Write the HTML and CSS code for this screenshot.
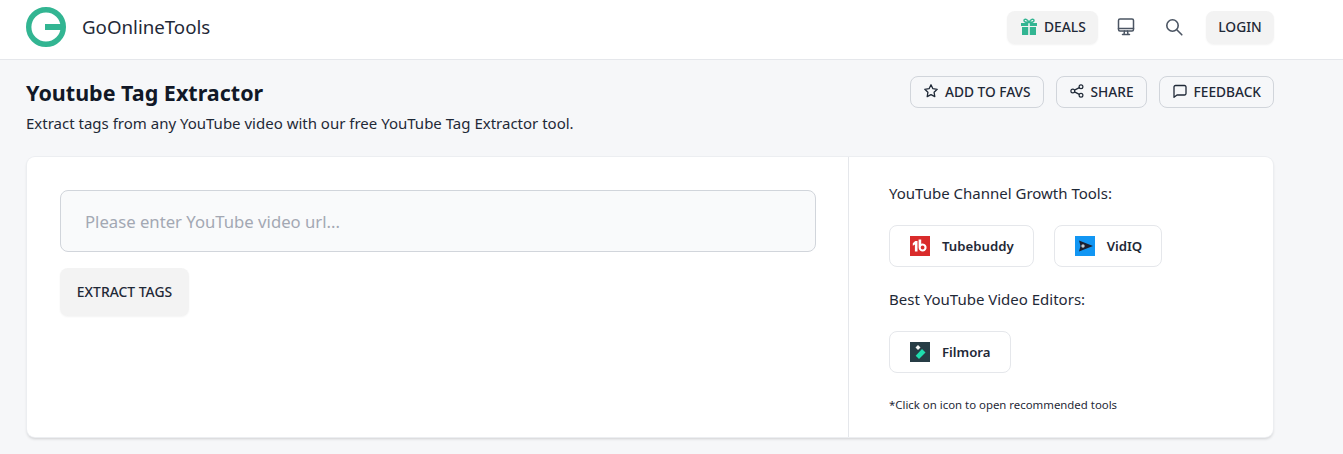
FILE: index.html
```html
<!DOCTYPE html>
<html lang="en">
<head>
  <meta charset="UTF-8" /><meta name="viewport" content="width=device-width, initial-scale=1.0"/>
  <title>Youtube Tag Extractor</title>
  <link rel="stylesheet" href="styles.css">
</head>
<body>
  <header class="topbar">
    <div class="topbar-inner">
      <a class="brand" href="#">
        <svg class="brand-logo" viewBox="0 0 40 40" width="40" height="40">
          <circle cx="20" cy="20" r="17.3" fill="none" stroke="#32b592" stroke-width="5.4"/>
          <rect x="19" y="17" width="19" height="6" fill="#32b592"/>
        </svg>
        <span>GoOnlineTools</span>
      </a>
      <nav class="topnav">
        <button class="pill deals">
          <svg viewBox="0 0 18 18" width="18" height="18" fill="#32b592">
            <path d="M1 5h7.200v3H1zM9.800 5H17v3H9.800zM2 9h6.200v8H2zM9.800 9H16v8H9.800z"/>
            <path d="M9 4.500C7.500 1 4.500 .5 4 2.200 3.600 3.800 6 4.500 9 4.500zM9 4.500c1.500-3.500 4.500-4 5-2.300.4 1.600-2 2.300-5 2.300z" fill="none" stroke="#32b592" stroke-width="1.500"/>
          </svg>
          DEALS
        </button>
        <button class="icon-btn">
          <svg viewBox="0 0 18 18" width="18" height="18" fill="none" stroke="#4b5563" stroke-width="1.500" stroke-linecap="round" stroke-linejoin="round">
            <rect x="1.500" y="1" width="15" height="12" rx="1.500"/>
            <path d="M1.500 10.500h15M7.500 13l-.5 3.500M10.500 13l.5 3.500M5.500 16.500h7"/>
          </svg>
        </button>
        <button class="icon-btn">
          <svg viewBox="0 0 18 18" width="18" height="18" fill="none" stroke="#4b5563" stroke-width="1.600" stroke-linecap="round">
            <circle cx="7.500" cy="7.500" r="5.700"/>
            <path d="M11.800 11.800l5 5"/>
          </svg>
        </button>
        <button class="pill login">LOGIN</button>
      </nav>
    </div>
  </header>

  <main class="page">
    <div class="title-row">
      <div>
        <h1>Youtube Tag Extractor</h1>
        <p class="subtitle">Extract tags from any YouTube video with our free YouTube Tag Extractor tool.</p>
      </div>
      <div class="actions">
        <button class="outline">
          <svg viewBox="0 0 16 16" width="16" height="16" fill="none" stroke="#1f2937" stroke-width="1.300" stroke-linejoin="round">
            <path d="M8 1.800l1.900 3.900 4.300.6-3.100 3 .7 4.300L8 11.600l-3.800 2 .7-4.300-3.100-3 4.300-.6z"/>
          </svg>
          ADD TO FAVS
        </button>
        <button class="outline">
          <svg viewBox="0 0 16 16" width="16" height="16" fill="none" stroke="#1f2937" stroke-width="1.200">
            <circle cx="3.800" cy="8" r="1.900"/>
            <circle cx="12" cy="3.800" r="1.900"/>
            <circle cx="12" cy="12.200" r="1.900"/>
            <path d="M5.500 7.100l4.800-2.500M5.500 8.900l4.800 2.500"/>
          </svg>
          SHARE
        </button>
        <button class="outline">
          <svg viewBox="0 0 16 16" width="16" height="16" fill="none" stroke="#1f2937" stroke-width="1.300" stroke-linejoin="round">
            <path d="M2 4a1.500 1.500 0 0 1 1.500-1.500h9A1.500 1.500 0 0 1 14 4v6.500a1.500 1.500 0 0 1-1.500 1.500H5l-3 2.300z"/>
          </svg>
          FEEDBACK
        </button>
      </div>
    </div>

    <section class="card">
      <div class="card-main">
        <input class="url-input" type="text" placeholder="Please enter YouTube video url..." />
        <button class="extract">EXTRACT TAGS</button>
      </div>
      <aside class="card-side">
        <p class="side-label">YouTube Channel Growth Tools:</p>
        <div class="tool-row">
          <a class="tool" href="#">
            <svg viewBox="0 0 20 20" width="20" height="20">
              <rect width="20" height="20" fill="#d92b2b"/>
              <path d="M2.800 7.200l2.400-2.200h2.300v10.500H4.900V8.600l-2.100 1.200z" fill="#fff"/>
              <path d="M8.600 3.500h2.600v4.200a4 4 0 1 1-2.600 3.800zM12.600 9.600a1.900 1.900 0 1 0 0 3.800 1.900 1.900 0 0 0 0-3.800z" fill="#fff" fill-rule="evenodd"/>
            </svg>
            Tubebuddy
          </a>
          <a class="tool" href="#">
            <svg viewBox="0 0 20 20" width="20" height="20">
              <rect width="20" height="20" fill="#1296f3"/>
              <path d="M4 4.500L18 10 4 15.500 5.500 10z" fill="#1c2030"/>
              <circle cx="8" cy="10" r="1.700" fill="#c3cbd2"/>
            </svg>
            VidIQ
          </a>
        </div>
        <p class="side-label">Best YouTube Video Editors:</p>
        <div class="tool-row">
          <a class="tool" href="#">
            <svg viewBox="0 0 20 20" width="20" height="20">
              <rect width="20" height="20" fill="#263c45"/>
              <path d="M8 3l2.500 2.500L8 8 5.500 5.500z" fill="#f2f5f5"/>
              <path d="M12 7l3.500 3.500-6.500 6.500-3.300-3.300z" fill="#1fdcae"/>
            </svg>
            Filmora
          </a>
        </div>
        <p class="side-note">*Click on icon to open recommended tools</p>
      </aside>
    </section>
  </main>
</body>
</html>
```

FILE: styles.css
```css
* { box-sizing: border-box; margin: 0; padding: 0; }

body {
  background: #f6f7f9;
  color: #1f2937;
  font-family: 'Noto Sans', sans-serif;
  min-height: 100vh;
  overflow: hidden;
}

button {
  font-family: inherit;
  cursor: pointer;
}

a {
  text-decoration: none;
  color: inherit;
}

.topbar {
  background: #fff;
  border-bottom: 1px solid #e5e7eb;
  height: 60px;
}

.topbar-inner {
  width: 1248px;
  margin-left: 26px;
  height: 54px;
  display: flex;
  align-items: center;
  justify-content: space-between;
}

.brand {
  display: flex;
  align-items: center;
  gap: 16px;
  font-size: 18.7px;
  color: #1f2937;
}

.brand span {
  padding-bottom: 2px;
}

.topnav {
  display: flex;
  align-items: center;
}

.pill {
  display: flex;
  align-items: center;
  height: 33px;
  padding-bottom: 1px;
  background: #f3f3f3;
  border: none;
  border-radius: 8px;
  font-size: 13.8px;
  font-weight: 500;
  color: #1f2937;
  box-shadow: 0 1px 2px rgba(0, 0, 0, 0.05);
}

.deals {
  width: 91px;
  padding-left: 13px;
  gap: 6px;
}

.login {
  width: 68px;
  justify-content: center;
}

.icon-btn {
  display: flex;
  align-items: center;
  justify-content: center;
  width: 18px;
  height: 33px;
  background: none;
  border: none;
}

.deals + .icon-btn { margin-left: 19px; }
.icon-btn + .icon-btn { margin-left: 30px; }
.icon-btn + .login { margin-left: 23px; }

.page {
  width: 1248px;
  margin-left: 26px;
}

.title-row {
  display: flex;
  justify-content: space-between;
  align-items: flex-start;
  padding-top: 16px;
}

h1 {
  font-size: 21.5px;
  line-height: 34px;
  font-weight: 700;
  color: #111827;
}

.subtitle {
  font-size: 15px;
  line-height: 22px;
  margin-top: 2px;
  color: #1f2937;
}

.actions {
  display: flex;
  gap: 12px;
}

.outline {
  display: flex;
  align-items: center;
  gap: 6px;
  height: 32px;
  padding: 0 12px 2px;
  background: transparent;
  border: 1px solid #d1d5db;
  border-radius: 8px;
  font-size: 13.7px;
  font-weight: 500;
  color: #1f2937;
}

.card {
  display: flex;
  width: 1246px;
  height: 280px;
  margin: 23px 0 0 1px;
  background: #fff;
  border-radius: 8px;
  box-shadow: 0 0 0 1px #eceef1, 0 2px 3px rgba(0, 0, 0, 0.16);
}

.card-main {
  width: 822px;
  padding: 33px;
  border-right: 1px solid #e5e7eb;
}

.url-input {
  display: block;
  width: 756px;
  height: 62px;
  padding: 0 24px;
  background: #f9fafb;
  border: 1px solid #d1d5db;
  border-radius: 8px;
  font-family: inherit;
  font-size: 16.7px;
  color: #1f2937;
}

.url-input::placeholder {
  color: #a3a8b3;
}

.extract {
  display: block;
  width: 129px;
  height: 48px;
  margin-top: 16px;
  padding-bottom: 2px;
  background: #f3f3f3;
  border: none;
  border-radius: 8px;
  font-size: 13.9px;
  font-weight: 500;
  color: #1f2937;
  box-shadow: 0 1px 2px rgba(0, 0, 0, 0.05);
}

.card-side {
  flex: 1;
  padding: 25px 40px 0;
}

.side-label {
  font-size: 15px;
  line-height: 22px;
}

.tool-row {
  display: flex;
  gap: 20px;
  margin: 21px 0;
}

.tool {
  display: flex;
  align-items: center;
  gap: 12px;
  height: 42px;
  padding: 0 19px 0 20px;
  background: #fff;
  border: 1px solid #e5e7eb;
  border-radius: 8px;
  font-size: 13.2px;
  font-weight: 600;
  color: #1f2937;
}

.side-note {
  font-size: 11.4px;
  line-height: 16px;
  margin-top: 24px;
  color: #1f2937;
}
```
